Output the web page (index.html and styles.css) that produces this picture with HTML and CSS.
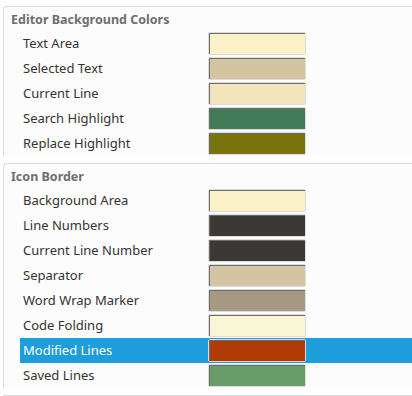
FILE: index.html
```html
<!DOCTYPE html>
<html lang="en">
<head>
  <meta charset="UTF-8">
  <title>Editor Colors</title>
  <link rel="stylesheet" href="styles.css">
</head>
<body>

  <div class="group">
    <div class="group-title">Editor Background Colors</div>
    <div class="row"><span class="label">Text Area</span><span class="swatch"><span class="fill c-fbf1c7"></span></span></div>
    <div class="row"><span class="label">Selected Text</span><span class="swatch"><span class="fill c-d5c4a1"></span></span></div>
    <div class="row"><span class="label">Current Line</span><span class="swatch"><span class="fill c-f2e5bc"></span></span></div>
    <div class="row"><span class="label">Search Highlight</span><span class="swatch"><span class="fill c-427b58"></span></span></div>
    <div class="row"><span class="label">Replace Highlight</span><span class="swatch"><span class="fill c-79740e"></span></span></div>
  </div>

  <div class="group">
    <div class="group-title">Icon Border</div>
    <div class="row"><span class="label">Background Area</span><span class="swatch"><span class="fill c-fbf1c7"></span></span></div>
    <div class="row"><span class="label">Line Numbers</span><span class="swatch"><span class="fill c-3c3836"></span></span></div>
    <div class="row"><span class="label">Current Line Number</span><span class="swatch"><span class="fill c-3c3836"></span></span></div>
    <div class="row"><span class="label">Separator</span><span class="swatch"><span class="fill c-d5c4a1"></span></span></div>
    <div class="row"><span class="label">Word Wrap Marker</span><span class="swatch"><span class="fill c-a89984"></span></span></div>
    <div class="row"><span class="label">Code Folding</span><span class="swatch"><span class="fill c-f9f5d7"></span></span></div>
    <div class="row selected"><span class="label">Modified Lines</span><span class="swatch"><span class="fill c-af3a03"></span></span></div>
    <div class="row"><span class="label">Saved Lines</span><span class="swatch"><span class="fill c-689d6a"></span></span></div>
  </div>

  <div class="group"></div>

</body>
</html>
```

FILE: styles.css
```css
/* Ajustes gerais */
body {
  margin: 0;
  padding-top: 6px;
  background-color: #ffffff;
  font-family: "Noto Sans", "Open Sans", sans-serif;
  font-size: 13px;
  color: #333333;
  overflow: hidden;
}

/* Grupos com moldura */
.group {
  margin-left: 3px;
  margin-bottom: 7px;
  border-top: 1px solid #d8d8d8;
  border-left: 1px solid #d8d8d8;
  border-top-left-radius: 4px;
  background-color: #fcfcfc;
}

.group-title {
  height: 23px;
  padding-top: 1px;
  line-height: 24px;
  padding-left: 7px;
  font-weight: bold;
  font-size: 12.5px;
  color: #6e6e6e;
}

/* Linhas de cor */
.row {
  display: flex;
  align-items: center;
  height: 25px;
  margin-left: 16px;
}

.row .label {
  width: 188px;
  padding-left: 3px;
  padding-bottom: 2px;
  box-sizing: border-box;
  white-space: nowrap;
}

.row.selected {
  background-color: #1e9ddc;
  color: #ffffff;
}

.swatch {
  display: block;
  width: 98px;
  height: 23px;
  box-sizing: border-box;
  border: 1px solid #dcdcdc;
  border-radius: 2px;
  background-color: #f0f0f0;
}

.fill {
  display: block;
  height: 100%;
  box-sizing: border-box;
  border-top: 1px solid #6c6c6c;
  border-left: 1px solid #6c6c6c;
}

.c-fbf1c7 { background-color: #fbf1c7; }
.c-d5c4a1 { background-color: #d5c4a1; }
.c-f2e5bc { background-color: #f2e5bc; }
.c-427b58 { background-color: #427b58; }
.c-79740e { background-color: #79740e; }
.c-3c3836 { background-color: #3c3836; }
.c-a89984 { background-color: #a89984; }
.c-f9f5d7 { background-color: #f9f5d7; }
.c-af3a03 { background-color: #af3a03; }
.c-689d6a { background-color: #689d6a; }
```
